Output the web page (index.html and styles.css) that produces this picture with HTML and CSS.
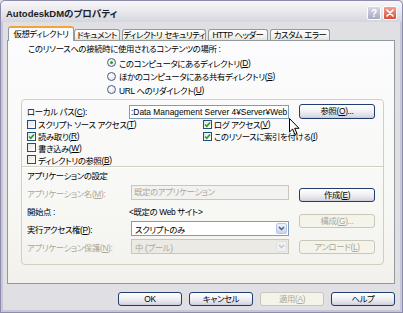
FILE: index.html
```html
<!DOCTYPE html>
<html lang="ja">
<head>
<meta charset="utf-8">
<title>AutodeskDMのプロパティ</title>
<link rel="stylesheet" href="styles.css">
</head>
<body>
<div class="win">
  <div class="titlebar">
    <span class="title">AutodeskDMのプロパティ</span>
    <span class="tbtn help">?</span>
    <span class="tbtn close"><svg width="8" height="8" viewBox="0 0 8 8"><path d="M1 1L7 7M7 1L1 7" stroke="#fff" stroke-width="1.7" stroke-linecap="round"/></svg></span>
  </div>
  <div class="frame">
    <div class="tabs">
      <div class="tab active w1">仮想ディレクトリ</div>
      <div class="tab w2">ドキュメント</div>
      <div class="tab w3">ディレクトリ セキュリティ</div>
      <div class="tab w4">HTTP ヘッダー</div>
      <div class="tab w5">カスタム エラー</div>
    </div>
    <div class="page">
      <div class="intro">このリソースへの接続時に使用されるコンテンツの場所 :</div>
      <div class="radios">
        <div class="opt"><span class="rb on"></span>このコンピュータにあるディレクトリ(<u>D</u>)</div>
        <div class="opt"><span class="rb"></span>ほかのコンピュータにある共有ディレクトリ(<u>S</u>)</div>
        <div class="opt"><span class="rb"></span>URL へのリダイレクト(<u>U</u>)</div>
      </div>
      <div class="group">
        <div class="pathrow">
          <span class="lbl">ローカル パス(<u>C</u>):</span>
          <div class="input path">:Data Management Server 4¥Server¥Web</div>
          <div class="btn">参照(<u>O</u>)...</div>
        </div>
        <div class="checks">
          <div class="cb"><span class="box"></span>スクリプト ソース アクセス(<u>T</u>)</div>
          <div class="cb"><span class="box on"><svg width="7" height="7" viewBox="0 0 7 7"><path d="M1 3.5L2.8 5.3L6 1.5" fill="none" stroke="#21a121" stroke-width="1.6"/></svg></span>ログ アクセス(<u>V</u>)</div>
          <div class="cb"><span class="box on"><svg width="7" height="7" viewBox="0 0 7 7"><path d="M1 3.5L2.8 5.3L6 1.5" fill="none" stroke="#21a121" stroke-width="1.6"/></svg></span>読み取り(<u>R</u>)</div>
          <div class="cb"><span class="box on"><svg width="7" height="7" viewBox="0 0 7 7"><path d="M1 3.5L2.8 5.3L6 1.5" fill="none" stroke="#21a121" stroke-width="1.6"/></svg></span>このリソースに索引を付ける(<u>I</u>)</div>
          <div class="cb"><span class="box"></span>書き込み(<u>W</u>)</div>
          <div class="cb"></div>
          <div class="cb"><span class="box"></span>ディレクトリの参照(<u>B</u>)</div>
          <div class="cb"></div>
        </div>
        <div class="sep"></div>
        <div class="apphead">アプリケーションの設定</div>
        <div class="app">
          <div class="appfields">
            <div class="arow"><span class="lbl dis">アプリケーション名(<u>M</u>):</span><div class="input dis">既定のアプリケーション</div></div>
            <div class="arow"><span class="lbl">開始点 :</span><span class="val">&lt;既定の Web サイト&gt;</span></div>
            <div class="arow"><span class="lbl">実行アクセス権(<u>P</u>):</span><div class="select"><span class="sv">スクリプトのみ</span><span class="arrow"><svg width="7" height="5" viewBox="0 0 7 5"><path d="M1 1L3.5 3.5L6 1" fill="none" stroke="#4d6185" stroke-width="1.5"/></svg></span></div></div>
            <div class="arow"><span class="lbl dis">アプリケーション保護(<u>N</u>):</span><div class="select dis"><span class="sv">中 (プール)</span><span class="arrow"><svg width="7" height="5" viewBox="0 0 7 5"><path d="M1 1L3.5 3.5L6 1" fill="none" stroke="#c0c4cc" stroke-width="1.5"/></svg></span></div></div>
          </div>
          <div class="appbtns">
            <div class="btn">作成(<u>E</u>)</div>
            <div class="btn dis">構成(<u>G</u>)...</div>
            <div class="btn dis">アンロード(<u>L</u>)</div>
          </div>
        </div>
      </div>
    </div>
    <div class="footer">
      <div class="btn fb">OK</div>
      <div class="btn fb">キャンセル</div>
      <div class="btn fb dis">適用(<u>A</u>)</div>
      <div class="btn fb">ヘルプ</div>
    </div>
  </div>
  <svg class="cursor" width="12" height="18" viewBox="0 0 12 18"><path d="M0.5 0.5L0.5 14L3.6 11L6 16.5L8 15.6L5.7 10.3L10 10.3Z" fill="#fff" stroke="#000" stroke-width="1"/></svg>
</div>
</body>
</html>
```

FILE: styles.css
```css
* { box-sizing: border-box; }
html, body { margin: 0; padding: 0; }
body {
  width: 403px;
  height: 313px;
  overflow: hidden;
  font-family: "Liberation Sans", "Noto Sans CJK JP", sans-serif;
  font-size: 8.4px;
  letter-spacing: -0.35px;
  font-feature-settings: "palt";
  color: #000;
  background: #e0dfe3;
}
u { text-decoration: underline; text-underline-offset: 1px; }

.win {
  position: relative;
  width: 403px;
  height: 313px;
  display: flex;
  flex-direction: column;
}

.titlebar {
  flex: none;
  height: 22px;
  display: flex;
  align-items: center;
  padding: 0 5px;
  background: linear-gradient(#f8f8fa, #e6e6ec 55%, #d5d5de);
  border: 1px solid #8d8dab;
  border-bottom: none;
  border-radius: 5px 5px 0 0;
}
.title {
  flex: 1;
  font-weight: bold;
  font-size: 9.5px;
  letter-spacing: 0;
  color: #1c1c24;
  padding-top: 2px;
}
.tbtn {
  width: 14px;
  height: 14px;
  margin-top: 3px;
  border-radius: 2px;
  border: 1px solid #fdfdff;
  display: flex;
  align-items: center;
  justify-content: center;
}
.help {
  margin-right: 2px;
  background: linear-gradient(#d6d8e6, #a7abc3);
  color: #fff;
  font-weight: bold;
  font-size: 10px;
  letter-spacing: 0;
}
.close {
  background: linear-gradient(#f3a090, #d64c36);
}

.frame {
  flex: 1;
  border: 1px solid #8d8dab;
  border-top: none;
  box-shadow: inset 2px 0 0 #c6c6d8, inset -2px 0 0 #c6c6d8, inset 0 -2px 0 #c6c6d8;
  padding: 4px 7px 0 6px;
}

.tabs {
  height: 14px;
  display: flex;
  align-items: flex-end;
  gap: 2px;
  padding-left: 1px;
}
.tab {
  height: 11px;
  line-height: 10px;
  text-align: center;
  white-space: nowrap;
  letter-spacing: -0.45px;
  border: 1px solid #919b9c;
  border-bottom: none;
  border-radius: 3px 3px 0 0;
  background: linear-gradient(#ffffff, #f0efea 70%, #e4e3dc);
}
.tab.active {
  position: relative;
  z-index: 1;
  height: 15px;
  line-height: 13px;
  margin-bottom: -1px;
  margin-right: -2px;
  background: #fcfcfe;
  border-top: 2px solid #f2a437;
}
.w1 { width: 66px; }
.w2 { width: 46px; }
.w3 { width: 84px; }
.w4 { width: 60px; }
.w5 { width: 60px; }

.page {
  height: 244px;
  border: 1px solid #919b9c;
  background: linear-gradient(#fcfcfe, #f7f7f4 70%, #f2f1ec);
  padding-top: 2px;
}
.intro {
  line-height: 12px;
  padding-left: 20px;
}
.radios {
  margin-top: 1px;
  margin-left: 99px;
}
.opt {
  height: 13.5px;
  display: flex;
  align-items: center;
}
.rb {
  width: 9px;
  height: 9px;
  border-radius: 50%;
  border: 1px solid #4e5d7a;
  background: radial-gradient(circle at 40% 40%, #fff, #dcdce4);
  margin-right: 3px;
  display: flex;
  align-items: center;
  justify-content: center;
  flex: none;
}
.rb.on::after {
  content: "";
  width: 3px;
  height: 3px;
  border-radius: 50%;
  background: #2aa12a;
}

.group {
  margin-top: 2px;
  margin-left: 13px;
  width: 363px;
  height: 166px;
  border: 1px solid #d0d0bf;
  border-radius: 4px;
  padding: 4px 7px 8px 5px;
}
.pathrow {
  height: 15px;
  display: flex;
  align-items: center;
}
.lbl {
  flex: none;
  width: 102px;
  white-space: nowrap;
}
.lbl.dis, .dis { color: #aca899; }
.input {
  height: 14px;
  width: 160px;
  border: 1px solid #7f9db9;
  background: #fff;
  line-height: 12px;
  padding: 0 2px;
  white-space: nowrap;
  overflow: hidden;
}
.input.path {
  margin-top: 1px;
  padding-left: 1px;
  letter-spacing: 0;
}
.input.dis {
  width: 158px;
  background: #f2f2f0;
  border-color: #c9c7ba;
  height: 15px;
  line-height: 13px;
}

.btn {
  flex: none;
  width: 76px;
  height: 15px;
  line-height: 13px;
  text-align: center;
  white-space: nowrap;
  border: 1px solid #1f3d6e;
  border-radius: 3px;
  background: linear-gradient(#ffffff, #f4f4f6 40%, #dcdde6 85%, #c8c9d6);
}
.btn.dis {
  border-color: #c9c7ba;
  background: #f5f4ea;
  color: #aca899;
}
.pathrow .btn { margin-left: 10px; }

.checks {
  height: 47px;
  display: grid;
  grid-template-columns: 176px 1fr;
  grid-auto-rows: 11.75px;
}
.cb {
  display: flex;
  align-items: center;
  white-space: nowrap;
}
.box {
  flex: none;
  width: 9px;
  height: 9px;
  border: 1px solid #1c5180;
  background: linear-gradient(135deg, #e4e4dc, #ffffff);
  margin-right: 2px;
  display: flex;
  align-items: center;
  justify-content: center;
}

.sep {
  height: 2px;
  margin: 0 -7px 0 -5px;
  border-top: 1px solid #d0d0bf;
  border-bottom: 1px solid #ffffff;
}
.apphead {
  margin-top: 2px;
  line-height: 12px;
}
.app {
  margin-top: 2px;
  display: flex;
}
.appfields { width: 262px; }
.arow {
  height: 18px;
  display: flex;
  align-items: center;
}
.arow .lbl { width: 104px; }
.val { white-space: nowrap; margin-left: -2px; }
.select {
  width: 158px;
  height: 15px;
  border: 1px solid #7f9db9;
  background: #fff;
  display: flex;
  align-items: center;
  padding: 0 1px 0 3px;
}
.select.dis {
  background: #ebeae5;
  border-color: #c9c7ba;
}
.sv { flex: 1; white-space: nowrap; }
.arrow {
  width: 11px;
  height: 11px;
  border: 1px solid #b4c8e8;
  border-radius: 2px;
  background: linear-gradient(#eef2fb, #c7d5ee);
  display: flex;
  align-items: center;
  justify-content: center;
}
.select.dis .arrow {
  border-color: #e0e0e0;
  background: #f0f0f0;
}
.appbtns {
  margin-left: 10px;
  margin-top: 4px;
  display: flex;
  flex-direction: column;
  gap: 12px;
}
.appbtns .btn { height: 14px; line-height: 12px; }

.footer {
  margin-top: 8px;
  display: flex;
  justify-content: flex-end;
  gap: 7px;
}
.btn.fb { width: 64px; height: 14px; line-height: 12px; }

.cursor {
  position: absolute;
  left: 289px;
  top: 118px;
}
```
